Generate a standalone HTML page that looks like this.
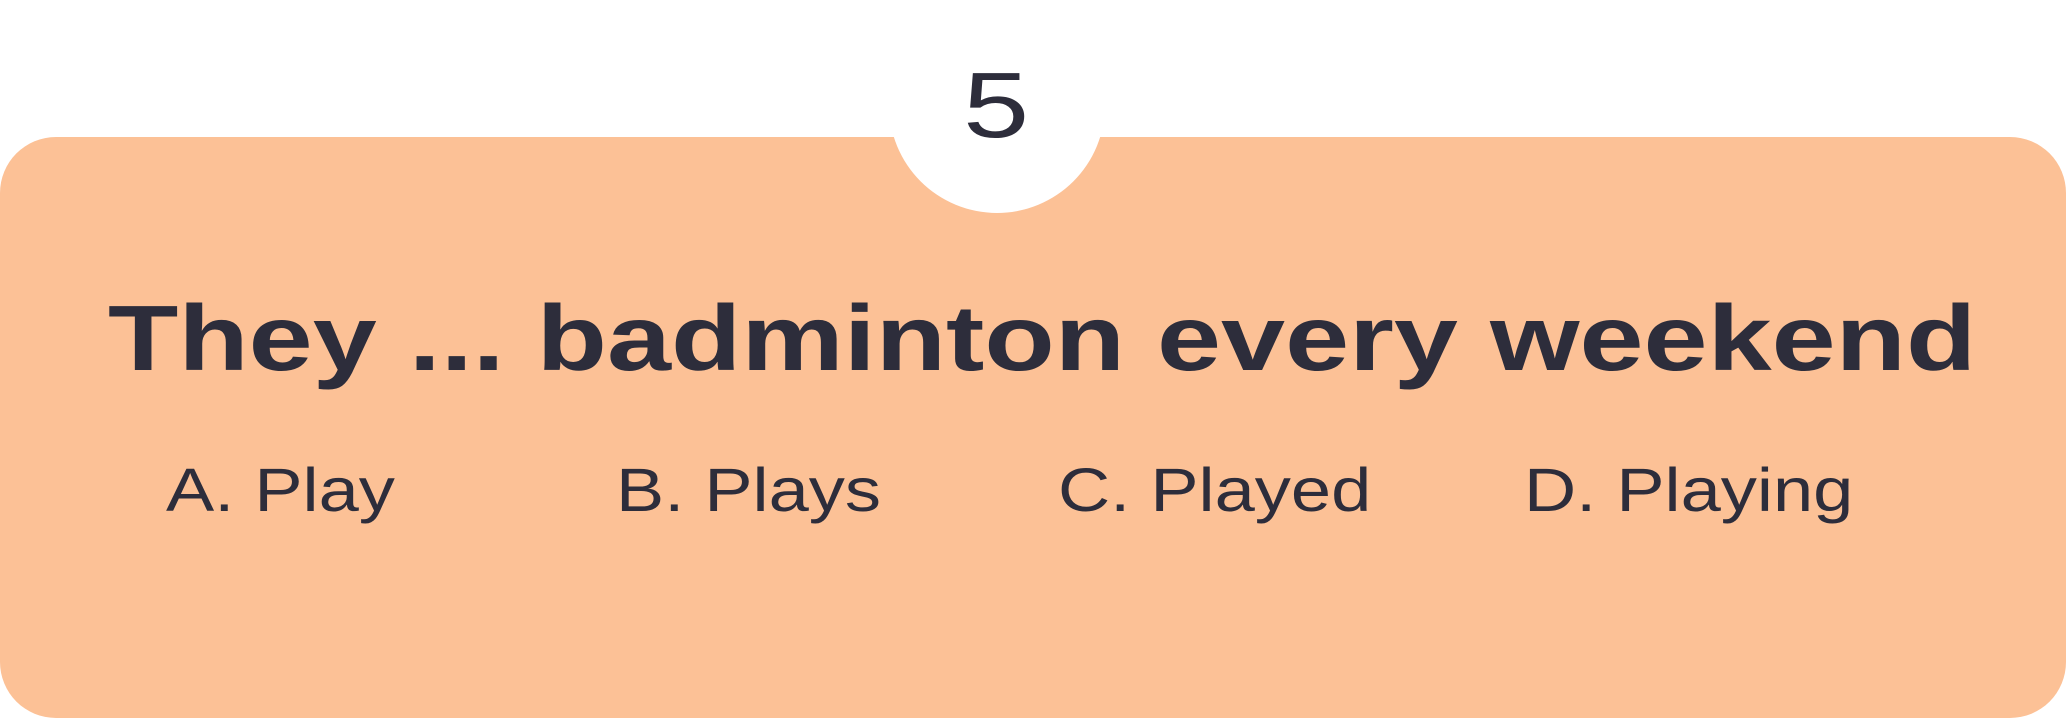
<!DOCTYPE html>
<html><head><meta charset="utf-8"><style>
html,body{margin:0;padding:0;background:#fff;}
body{width:2066px;height:718px;position:relative;overflow:hidden;font-family:"Liberation Sans",Arial,sans-serif;color:#2d2d3b;}
.card{position:absolute;left:0;top:137px;width:2066px;height:581px;background:#fcc196;border-radius:56px;}
.notch{position:absolute;left:889px;top:-3px;width:216px;height:216px;border-radius:50%;background:#fff;}
.t{position:absolute;white-space:nowrap;transform-origin:0 0;line-height:1;}
.num{left:963px;top:59px;font-size:93px;transform:scaleX(1.28);}
.q{left:108px;top:292px;font-size:93px;font-weight:bold;transform:scaleX(1.238);}
.o{top:460px;font-size:61.5px;transform:scaleX(1.175);}
</style></head><body>
<div class="card"></div>
<div class="notch"></div>
<div class="t num">5</div>
<div class="t q">They ... badminton every weekend</div>
<div class="t o" style="left:166px">A. Play</div>
<div class="t o" style="left:616px">B. Plays</div>
<div class="t o" style="left:1058px">C. Played</div>
<div class="t o" style="left:1524px">D. Playing</div>
</body></html>
